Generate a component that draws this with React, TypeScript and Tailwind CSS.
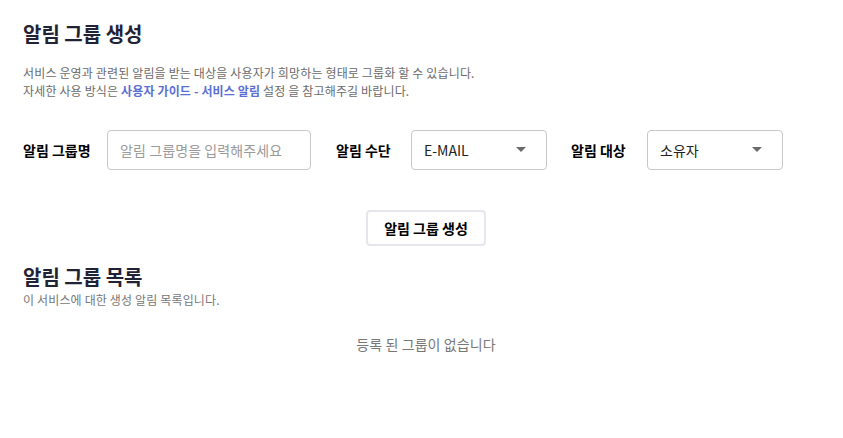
import React from "react";

const font = { fontFamily: '"Noto Sans CJK KR", "Noto Sans", sans-serif' };

function Caret() {
  return (
    <svg width="10" height="6" viewBox="0 0 10 6" className="shrink-0">
      <path d="M0 0 L10 0 L5 5 Z" fill="#6b6b6b" />
    </svg>
  );
}

function Select({ value, width }: { value: string; width: string }) {
  return (
    <div className={`flex h-[40px] ${width} items-center justify-between rounded-[4px] border border-[#c8c8c8] pl-[12px] pr-[20px] text-[14px] text-[#222]`}>
      <span>{value}</span>
      <Caret />
    </div>
  );
}

export default function App() {
  return (
    <div style={font} className="w-[843px] h-[438px] bg-white pl-[23px] pt-[19px]">
      <h1 className="text-[20px] font-bold leading-[30px] text-[#1f2335]">알림 그룹 생성</h1>
      <div className="mt-[15px] text-[12px] leading-[18px] tracking-[0.15px] text-[#6b6b6b]">
        <p>서비스 운영과 관련된 알림을 받는 대상을 사용자가 희망하는 형태로 그룹화 할 수 있습니다.</p>
        <p>
          자세한 사용 방식은 <span className="font-bold text-[#5b6fd3]">사용자 가이드 - 서비스 알림</span> 설정 을 참고해주길 바랍니다.
        </p>
      </div>
      <div className="mt-[30px] flex items-center">
        <span className="text-[14px] font-bold text-black w-[84px]">알림 그룹명</span>
        <div className="flex h-[40px] w-[204px] items-center rounded-[4px] border border-[#c8c8c8] pl-[12px] text-[14px] tracking-[0.1px] text-[#9a9a9a]">
          알림 그룹명을 입력해주세요
        </div>
        <span className="ml-[25px] w-[75px] text-[14px] font-bold text-black">알림 수단</span>
        <Select value="E-MAIL" width="w-[136px]" />
        <span className="ml-[24px] w-[76px] text-[14px] font-bold text-black">알림 대상</span>
        <Select value="소유자" width="w-[136px]" />
      </div>
      <div className="mt-[40px] flex justify-center pr-[23px]">
        <div className="ml-[9px] flex h-[36px] w-[120px] items-center justify-center rounded-[4px] border-2 border-[#e6e6ec] text-[14px] font-bold text-black">
          알림 그룹 생성
        </div>
      </div>
      <h2 className="mt-[16px] text-[20px] font-bold leading-[30px] text-[#1f2335]">알림 그룹 목록</h2>
      <p className="text-[12px] leading-[16px] tracking-[0.15px] text-[#777]">이 서비스에 대한 생성 알림 목록입니다.</p>
      <div className="mt-[26px] flex justify-center pr-[23px]">
        <span className="ml-[9px] text-[14px] tracking-[0.1px] text-[#777]">등록 된 그룹이 없습니다</span>
      </div>
    </div>
  );
}
